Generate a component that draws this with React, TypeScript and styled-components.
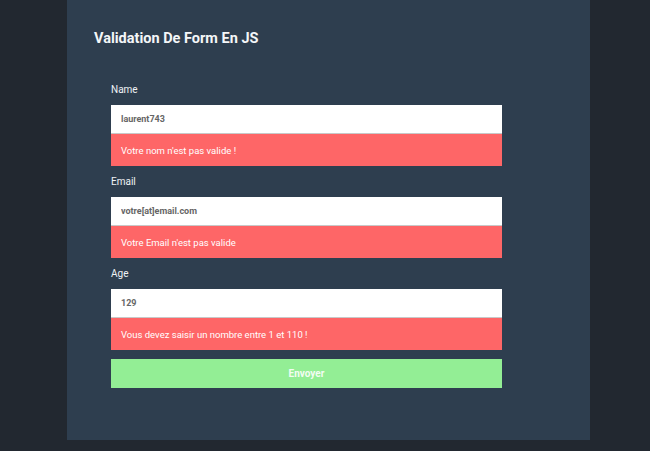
import React from "react";
import styled, { createGlobalStyle } from "styled-components";

const Global = createGlobalStyle`
  html, body { margin: 0; padding: 0; background: #222830; }
  body { font-family: Roboto, "Liberation Sans", sans-serif; }
  * { box-sizing: border-box; }
`;

const Page = styled.div`
  width: 650px;
  height: 451px;
  background: #222830;
  padding-left: 67px;
  overflow: hidden;
`;

const Panel = styled.main`
  width: 523px;
  height: 440px;
  background: #2e3e4f;
  padding: 29px 0 0 27px;
`;

const Title = styled.h1`
  margin: 0;
  font-size: 14.5px;
  font-weight: 700;
  color: #f4f6f8;
  line-height: 20px;
`;

const Form = styled.form`
  width: 391px;
  margin: 33px 0 0 17px;
  display: flex;
  flex-direction: column;
`;

const Field = styled.div`
  display: flex;
  flex-direction: column;
  margin-bottom: 8px;
`;

const Label = styled.label`
  font-size: 10px;
  color: #eef2f5;
  line-height: 16px;
  margin-bottom: 7px;
`;

const Input = styled.input`
  height: 29px;
  border: none;
  border-bottom: 1px solid #c8c8c8;
  background: #fff;
  padding: 0 10px;
  font-family: inherit;
  font-size: 9px;
  font-weight: 700;
  color: #666;
  outline: none;
`;

const Error = styled.div`
  height: 32px;
  background: #fe6667;
  color: #fff;
  font-size: 9.5px;
  padding: 0 10px;
  display: flex;
  align-items: center;
`;

const Button = styled.button`
  height: 29px;
  margin-top: 1px;
  border: none;
  background: #93ee95;
  color: rgba(255, 255, 255, 0.9);
  font-family: inherit;
  font-weight: 700;
  font-size: 10px;
`;

const fields = [
  { label: "Name", value: "laurent743", error: "Votre nom n'est pas valide !" },
  { label: "Email", value: "votre[at]email.com", error: "Votre Email n'est pas valide" },
  { label: "Age", value: "129", error: "Vous devez saisir un nombre entre 1 et 110 !" },
];

export default function App() {
  return (
    <Page>
      <Global />
      <Panel>
        <Title>Validation De Form En JS</Title>
        <Form onSubmit={(e) => e.preventDefault()}>
          {fields.map((f) => (
            <Field key={f.label}>
              <Label>{f.label}</Label>
              <Input defaultValue={f.value} />
              <Error>{f.error}</Error>
            </Field>
          ))}
          <Button type="submit">Envoyer</Button>
        </Form>
      </Panel>
    </Page>
  );
}
